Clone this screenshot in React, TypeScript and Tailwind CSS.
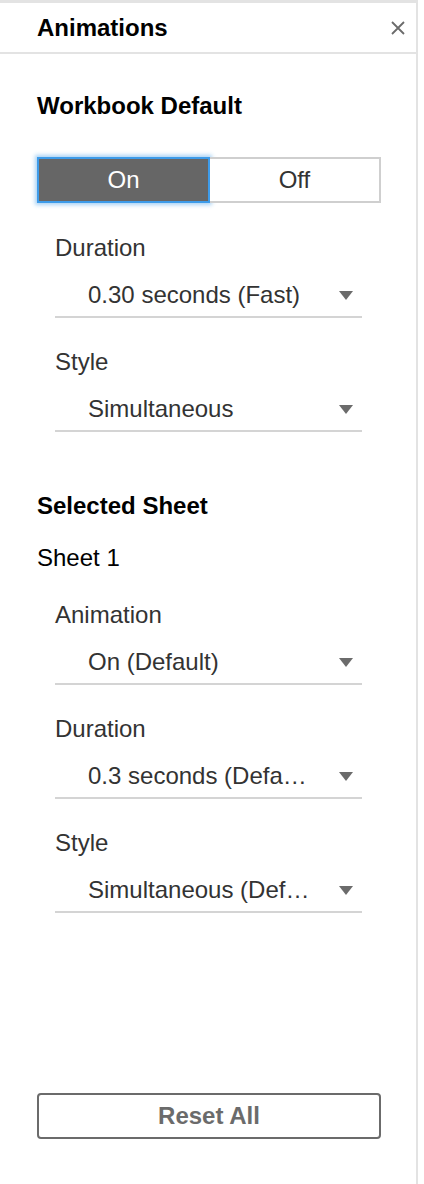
import React from "react";

const Caret = () => (
  <svg width="14" height="9" viewBox="0 0 14 9" className="shrink-0">
    <path d="M0 0 H14 L7 9 Z" fill="#6b6b6b" />
  </svg>
);

const Field = ({ label, value }: { label: string; value: string }) => (
  <div className="ml-[18px] w-[307px]">
    <div className="h-[28px] leading-[28px] text-[#333]">{label}</div>
    <div className="mt-[12px] flex h-[44px] items-center border-b-2 border-[#d4d4d4] pl-[33px] pr-[9px]">
      <span className="flex-1 truncate text-[#333]">{value}</span>
      <Caret />
    </div>
  </div>
);

export default function App() {
  return (
    <div className="h-[1184px] w-[424px] bg-white font-['Liberation_Sans',Arial,sans-serif] text-[24px]">
      <div className="flex h-full w-[418px] flex-col border-r-2 border-t-[3px] border-[#e3e3e3]">
        <div className="flex h-[51px] shrink-0 items-center justify-between border-b-2 border-[#e3e3e3] pl-[37px] pr-[11px]">
          <span className="font-bold text-black">Animations</span>
          <svg width="14" height="14" viewBox="0 0 14 14">
            <path d="M1 1 L13 13 M13 1 L1 13" stroke="#6b6b6b" strokeWidth="1.8" />
          </svg>
        </div>

        <div className="flex flex-1 flex-col px-[37px]">
          <div className="mt-[38px] h-[28px] leading-[28px] font-bold text-black">Workbook Default</div>

          <div className="mt-[37px] flex h-[46px] w-[344px]">
            <button className="h-full w-[173px] border-2 border-[#3d9be9] bg-[#666] text-white shadow-[0_0_4px_2px_rgba(61,155,233,0.45)]">
              On
            </button>
            <button className="h-full w-[171px] border-2 border-l-0 border-[#cfcfcf] bg-white text-[#333]">
              Off
            </button>
          </div>

          <div className="mt-[31px] flex flex-col gap-[30px]">
            <Field label="Duration" value="0.30 seconds (Fast)" />
            <Field label="Style" value="Simultaneous" />
          </div>

          <div className="mt-[60px] h-[28px] leading-[28px] font-bold text-black">Selected Sheet</div>
          <div className="mt-[24px] h-[28px] leading-[28px] text-black">Sheet 1</div>

          <div className="mt-[29px] flex flex-col gap-[30px]">
            <Field label="Animation" value="On (Default)" />
            <Field label="Duration" value="0.3 seconds (Defa…" />
            <Field label="Style" value="Simultaneous (Def…" />
          </div>

          <button className="mb-[45px] mt-auto h-[46px] w-[344px] rounded-[4px] border-2 border-[#6b6b6b] bg-white font-bold text-[#6b6b6b]">
            Reset All
          </button>
        </div>
      </div>
    </div>
  );
}
